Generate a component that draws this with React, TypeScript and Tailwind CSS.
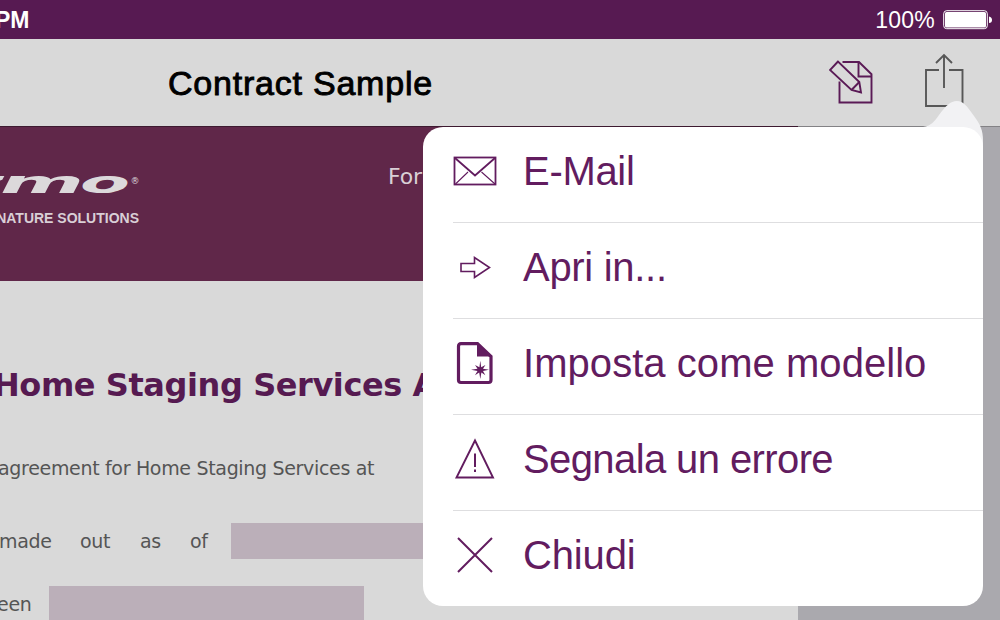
import type { ReactNode } from "react";

function EnvelopeIcon() {
  return (
    <svg width="44" height="30" viewBox="0 0 44 30" fill="none" stroke="#621c5f">
      <rect x="1.500" y="1.500" width="41" height="27" strokeWidth="1.800" />
      <path d="M2 2 22 19.500 42 2" strokeWidth="1.800" />
      <path d="M2.500 28 15 16M42 28 28.500 16" strokeWidth="1.100" />
    </svg>
  );
}

function ArrowIcon() {
  return (
    <svg width="44" height="30" viewBox="0 0 44 30" fill="none" stroke="#621c5f" strokeWidth="1.600">
      <path d="M8 11.500H21.500V5.500L36.500 15.500 21.500 25.500V19.500H8Z" />
    </svg>
  );
}

function TemplateIcon() {
  return (
    <svg width="44" height="44" viewBox="0 0 44 44">
      <path d="M8 2.700H24.500L38 15.500V39Q38 41.500 35.500 41.500H8Q5.500 41.500 5.500 39V5.200Q5.500 2.700 8 2.700Z" fill="none" stroke="#621c5f" strokeWidth="3.200" />
      <path d="M24 2V15.500H39Z" fill="#621c5f" />
      <path d="M27.300 19.700 28.200 26.200 32.400 24 30 27.700 36 28.800 30 29.900 32.400 34.200 28.400 31.400 27.300 38 26.200 31.400 22 34.200 24.500 29.900 18 28.800 24.500 27.700 22 24 26.400 26.200Z" fill="#621c5f" />
    </svg>
  );
}

function WarningIcon() {
  return (
    <svg width="44" height="44" viewBox="0 0 44 44" fill="none" stroke="#621c5f">
      <path d="M22 3.500 40 40.500H3.500Z" strokeWidth="1.900" />
      <path d="M22 16.500V30M22 32.500V35" strokeWidth="2" />
    </svg>
  );
}

function CloseIcon() {
  return (
    <svg width="44" height="44" viewBox="0 0 44 44" fill="none" stroke="#621c5f" strokeWidth="2">
      <path d="M5 5 39 39M39 5 5 39" />
    </svg>
  );
}

function EditIcon() {
  return (
    <svg width="46" height="46" viewBox="0 0 46 46" fill="none" stroke="#5a1a56" strokeWidth="1.900">
      <path d="M13.500 2H30L42.500 14.200V42.500H10.500V21.500" />
      <path d="M29.500 2V16.500H42.500" />
      <path d="M9 1.500 1 10 22.500 30 32 32.500 30.300 22Z" />
      <path d="M22.500 30 30.300 22" />
    </svg>
  );
}

function ShareIcon() {
  return (
    <svg width="42" height="56" viewBox="0 0 42 56" fill="none" stroke="#575757" strokeWidth="1.900">
      <path d="M15 18H2V54H38.500V18H25" />
      <path d="M20 36V3M12 11 20 3 28 11" />
    </svg>
  );
}

function Row({ icon, label, tracking }: { icon: ReactNode; label: string; tracking: string }) {
  return (
    <li className="flex h-24 items-center border-b border-[#dedee0] pb-[7px] last:h-[95px] last:border-b-0">
      <span className="flex w-11 shrink-0 items-center justify-center">{icon}</span>
      <span className={`ml-[26px] whitespace-nowrap text-[40px] leading-[48px] ${tracking}`}>{label}</span>
    </li>
  );
}

export default function App() {
  return (
    <div className="relative flex h-[620px] w-[1000px] flex-col overflow-hidden bg-[#aaa9ae] font-['Liberation_Sans',sans-serif]">
      <div className="flex h-[39px] shrink-0 items-center justify-between bg-[#571a52] pr-2 text-white">
        <span className="-ml-[5px] text-[23px] font-bold leading-[40px]">PM</span>
        <div className="flex items-center">
          <span className="mr-2 text-[23px] leading-[40px] tracking-[0.2px]">100%</span>
          <svg width="49" height="20" viewBox="0 0 49 20">
            <rect x="0.700" y="0.700" width="43.600" height="18" rx="3" fill="none" stroke="#fff" strokeWidth="1" />
            <rect x="2" y="2" width="41" height="15.500" rx="1.500" fill="#fff" />
            <path d="M46 6.500Q49 7 49 10T46 13Z" fill="#fff" />
          </svg>
        </div>
      </div>
      <header className="flex h-[88px] shrink-0 border-b border-[#838285] bg-[#d9d9d9]">
        <h1 className="ml-[168px] w-[661px] text-[34px] font-normal leading-[88px] tracking-[0.78px] text-black [-webkit-text-stroke:0.9px_black]">
          Contract Sample
        </h1>
        <div className="mt-[21px]"><EditIcon /></div>
        <div className="ml-[49px] mt-[13px]"><ShareIcon /></div>
      </header>
      <main className="-mt-px flex h-[494px] w-[798px] flex-col overflow-hidden">
        <div className="flex h-[155px] shrink-0 border-t border-[#3d1a30] bg-[#602749] text-[#d9cfd6]">
          <div className="w-[388px]">
            <svg className="mt-[46px]" width="145" height="22" viewBox="0 0 145 22" fill="#dcd9db" fontFamily="DejaVu Sans" fontWeight="bold" fontStyle="italic">
              <text x="-46" y="19.500" fontSize="30" textLength="50" lengthAdjust="spacingAndGlyphs">z</text>
              <text x="0" y="19.500" fontSize="30" textLength="84" lengthAdjust="spacingAndGlyphs">m</text>
              <text x="80" y="19.500" fontSize="30" textLength="50" lengthAdjust="spacingAndGlyphs">o</text>
              <text x="130.500" y="11" fontSize="9" fontWeight="normal" fontStyle="normal">®</text>
            </svg>
            <p className="mt-[15px] flex w-[139px] justify-end whitespace-nowrap text-[14px] font-bold leading-[16px]">SIGNATURE SOLUTIONS</p>
          </div>
          <span className="mt-[34px] font-['DejaVu_Sans',sans-serif] text-[22px] leading-[32px] tracking-[-0.2px]">Form</span>
        </div>
        <div className="flex flex-1 flex-col bg-[#d9d9d9] font-['DejaVu_Sans',sans-serif] text-[19px] text-[#555]">
          <h2 className="-ml-[7px] mt-[84px] w-[430px] overflow-hidden whitespace-nowrap text-[32px] font-bold leading-[40px] tracking-[-0.42px] text-[#561a51]">
            Home Staging Services Agreement
          </h2>
          <p className="-ml-[2px] mt-[47px] whitespace-nowrap leading-[32px] tracking-[-0.32px]">
            agreement for Home Staging Services at
          </p>
          <div className="mt-[39px] flex h-[36px] shrink-0 leading-[37px] tracking-[-0.3px]">
            <span className="-ml-px w-[81px]">made</span>
            <span className="w-[60px]">out</span>
            <span className="w-[50px]">as</span>
            <span className="w-[41px]">of</span>
            <span className="w-[320px] bg-[#bbafb9]" />
          </div>
          <div className="mt-[27px] flex h-[37px] shrink-0 leading-[37px] tracking-[-0.3px]">
            <span className="-ml-[3px] w-[52px]">een</span>
            <span className="w-[315px] bg-[#bbafb9]" />
          </div>
        </div>
      </main>
      <div className="absolute left-[423px] top-[101px] w-[560px]">
        <svg className="ml-[500px] block" width="60" height="60" viewBox="0 0 60 60">
          <path d="M0 26C8 25 11 21 16 14C23 5 27 0 34 0C40 0 44 5 51 15C57 23 60 29 60 40V60H0Z" fill="#f2f2f4" />
        </svg>
        <ul className="relative -mt-[34px] h-[479px] overflow-hidden rounded-[20px] bg-white pl-[30px] text-[#621c5f]">
          <Row icon={<EnvelopeIcon />} label="E-Mail" tracking="tracking-[-0.3px]" />
          <Row icon={<ArrowIcon />} label="Apri in..." tracking="tracking-[-0.3px]" />
          <Row icon={<TemplateIcon />} label="Imposta come modello" tracking="tracking-[0.05px]" />
          <Row icon={<WarningIcon />} label="Segnala un errore" tracking="tracking-[-0.6px]" />
          <Row icon={<CloseIcon />} label="Chiudi" tracking="tracking-[-0.15px]" />
        </ul>
      </div>
    </div>
  );
}
